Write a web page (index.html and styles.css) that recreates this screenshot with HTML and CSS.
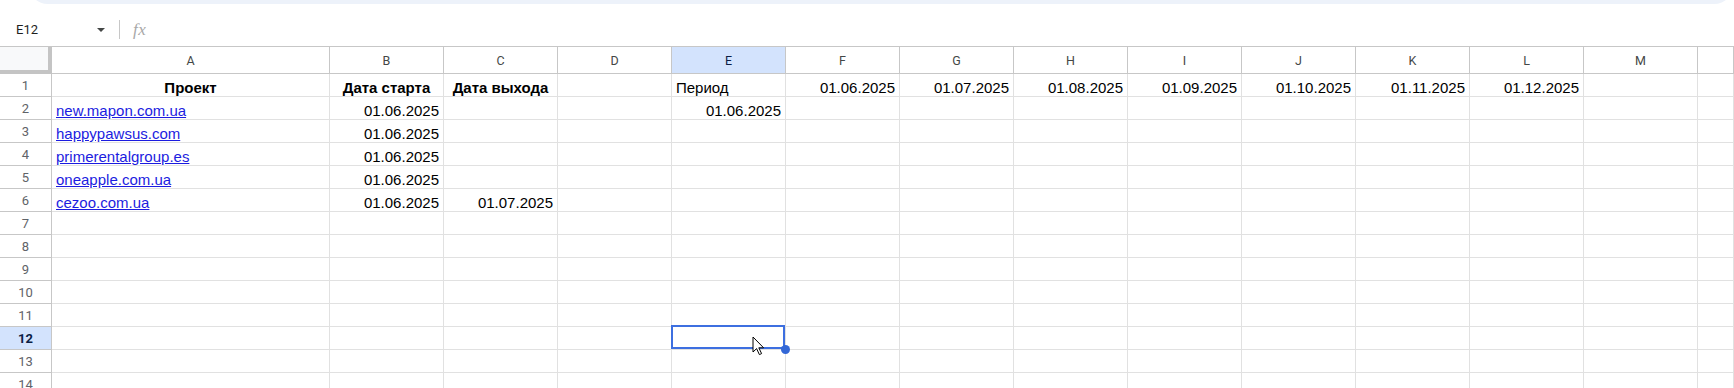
FILE: index.html
```html
<!DOCTYPE html>
<html>
<head>
  <title>Таблица</title>
  <link rel="stylesheet" href="styles.css">
</head>
<body>
  <div class="toolbar-edge"><div class="toolbar"></div></div>
  <div class="formula-bar">
    <div class="name-box">E12</div>
    <span class="name-arrow"></span>
    <span class="bar-sep"></span>
    <span class="fx">fx</span>
  </div>
  <div class="sheet" id="sheet"></div>
<script>
  const cols = ["A","B","C","D","E","F","G","H","I","J","K","L","M",""];
  const data = {
    1: {A:["Проект","head"], B:["Дата старта","head"], C:["Дата выхода","head"], E:["Период","text"],
        F:["01.06.2025","num"], G:["01.07.2025","num"], H:["01.08.2025","num"], I:["01.09.2025","num"],
        J:["01.10.2025","num"], K:["01.11.2025","num"], L:["01.12.2025","num"]},
    2: {A:["new.mapon.com.ua","link"], B:["01.06.2025","num"], E:["01.06.2025","num"]},
    3: {A:["happypawsus.com","link"], B:["01.06.2025","num"]},
    4: {A:["primerentalgroup.es","link"], B:["01.06.2025","num"]},
    5: {A:["oneapple.com.ua","link"], B:["01.06.2025","num"]},
    6: {A:["cezoo.com.ua","link"], B:["01.06.2025","num"], C:["01.07.2025","num"]}
  };
  const activeCol = "E";
  const activeRow = 12;

  function buildSheet() {
    const sheet = document.getElementById("sheet");
    let html = '<div class="corner"></div>';
    cols.forEach(function (c) {
      html += '<div class="col-head' + (c === activeCol ? ' active' : '') + '">' + c + '</div>';
    });
    for (let r = 1; r <= 14; r++) {
      html += '<div class="row-head' + (r === activeRow ? ' active' : '') + '">' + r + '</div>';
      const row = data[r] || {};
      cols.forEach(function (c) {
        const cell = row[c];
        if (r === activeRow && c === activeCol) {
          html += '<div class="cell selected"><div class="sel-box"></div><span class="sel-dot"></span>' +
            '<svg class="pointer" width="13" height="20" viewBox="0 0 13 20"><path d="M1 1 L1 16 L4.6 12.6 L7.4 18.6 L9.6 17.6 L6.8 11.8 L11.6 11.8 Z" fill="#fff" stroke="#000" stroke-width="1" stroke-linejoin="round"/></svg></div>';
        } else if (!cell) {
          html += '<div class="cell"></div>';
        } else if (cell[1] === "link") {
          html += '<div class="cell"><a href="#">' + cell[0] + '</a></div>';
        } else {
          html += '<div class="cell ' + cell[1] + '">' + cell[0] + '</div>';
        }
      });
    }
    sheet.innerHTML = html;
  }
  buildSheet();
</script>
</body>
</html>
```

FILE: styles.css
```css
body {
  margin: 0;
  background: #ffffff;
  overflow: hidden;
  font-family: "Liberation Sans", Arial, sans-serif;
}
.toolbar-edge {
  height: 13px;
  overflow: hidden;
}
.toolbar {
  margin-left: 28px;
  margin-top: -36px;
  height: 40px;
  border-radius: 24px;
  background-color: #edf2fa;
}
.formula-bar {
  height: 34px;
  box-sizing: border-box;
  border-bottom: 1px solid #c7c7c7;
  display: flex;
  align-items: center;
  padding-left: 16px;
}
.name-box {
  width: 81px;
  font-family: Roboto, Arial, sans-serif;
  font-size: 13px;
  color: #1f1f1f;
}
.name-arrow {
  width: 0;
  height: 0;
  border-left: 4px solid transparent;
  border-right: 4px solid transparent;
  border-top: 4px solid #444746;
  margin-top: 1px;
}
.bar-sep {
  width: 1px;
  height: 19px;
  background-color: #c7c7c7;
  margin-left: 14px;
  margin-right: 13px;
}
.fx {
  font-family: "Liberation Serif", serif;
  font-style: italic;
  font-size: 17px;
  color: #a8a8a8;
  letter-spacing: 0.5px;
}
.sheet {
  display: grid;
  grid-template-columns: 52px 278px repeat(12, 114px) 1fr;
  grid-template-rows: 27px;
  grid-auto-rows: 23px;
}
.corner {
  box-sizing: border-box;
  background-color: #f8f9fa;
  border-right: 4px solid #c4c4c4;
  border-bottom: 4px solid #c4c4c4;
}
.col-head {
  box-sizing: border-box;
  border-right: 1px solid #c7c7c7;
  border-bottom: 1px solid #c7c7c7;
  display: flex;
  align-items: center;
  justify-content: center;
  font-family: Roboto, Arial, sans-serif;
  font-size: 12.5px;
  color: #444746;
}
.col-head.active {
  background-color: #d3e3fd;
  color: #0b1d45;
}
.row-head {
  box-sizing: border-box;
  border-right: 1px solid #c7c7c7;
  border-bottom: 1px solid #c7c7c7;
  display: flex;
  align-items: center;
  justify-content: center;
  font-family: Roboto, Arial, sans-serif;
  font-size: 13px;
  color: #5f6368;
}
.row-head.active {
  background-color: #d3e3fd;
  color: #0b1d45;
  font-weight: bold;
}
.cell {
  box-sizing: border-box;
  border-right: 1px solid #e1e1e1;
  border-bottom: 1px solid #e1e1e1;
  padding: 0 4px;
  display: flex;
  align-items: flex-end;
  font-size: 15px;
  line-height: 17px;
  white-space: nowrap;
  overflow: hidden;
  color: #000000;
}
.cell a {
  color: #1c1ce0;
  text-decoration: underline;
}
.num {
  justify-content: flex-end;
}
.head {
  justify-content: center;
  font-weight: bold;
}
.selected {
  position: relative;
  overflow: visible;
}
.sel-box {
  position: absolute;
  left: -1px;
  top: -2px;
  right: 0;
  bottom: 0;
  border: 2px solid #3d6fe0;
}
.sel-dot {
  position: absolute;
  right: -5px;
  bottom: -5px;
  width: 9px;
  height: 9px;
  border-radius: 50%;
  background-color: #3367d6;
  z-index: 2;
}
.pointer {
  position: absolute;
  left: 80px;
  top: 9px;
  z-index: 3;
}
```
